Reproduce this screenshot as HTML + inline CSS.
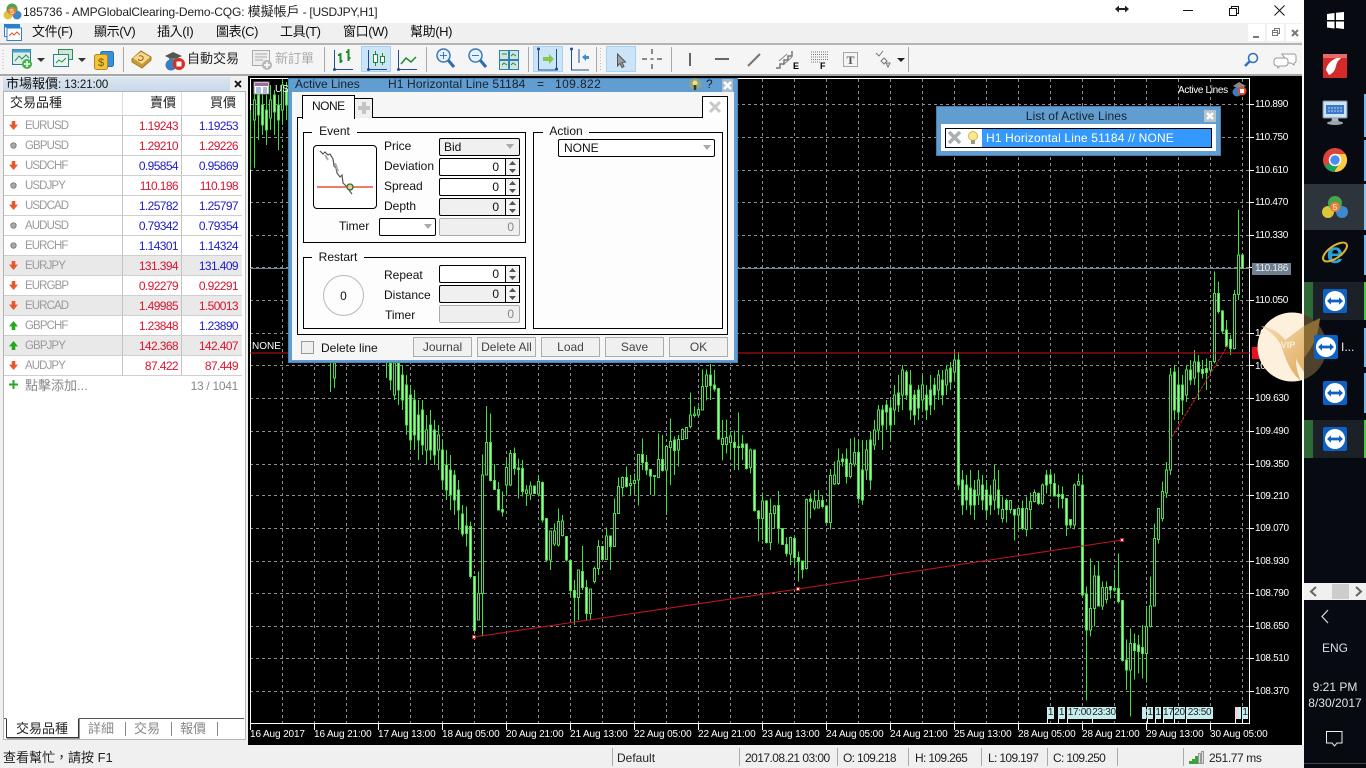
<!DOCTYPE html>
<html><head><meta charset="utf-8"><title>MT4</title>
<style>
html,body{margin:0;padding:0;width:1366px;height:768px;overflow:hidden;background:#f0f0f0;font-family:"Liberation Sans","Noto Sans CJK TC",sans-serif;font-size:12px;color:#111}
.a{position:absolute;box-sizing:border-box}
.t{position:absolute;white-space:nowrap;line-height:14px;height:14px}
.r{text-align:right}
.m{font-size:13px;letter-spacing:-.4px}
.sy{font-size:11.5px;letter-spacing:-.9px;color:#9a9a9a;margin-top:1px}
.p{font-size:12px;letter-spacing:-.6px;width:50px;text-align:right;margin-top:1px}
.R{color:#d9142e}.B{color:#1c1cc4}
.pl{color:#fff;font-size:10px;letter-spacing:-.35px;left:1255px;margin-top:1px}
.dl{color:#fff;font-size:10px;letter-spacing:-.12px;top:728px}
.f{position:absolute;box-sizing:border-box;border:1px solid #000;border-radius:2px;background:#fff}
.n{padding-right:20px;text-align:right;line-height:16px}
.g{background:#f0f0f0}
.d{position:absolute;box-sizing:border-box;border:1px solid #aaa;border-radius:2px;background:#efefef;color:#888;text-align:right;padding-right:5px;line-height:16px}
.btn{position:absolute;box-sizing:border-box;top:337px;height:20px;width:59px;border:1px solid #adadad;background:#f0f0f0;color:#444;text-align:center;line-height:18px}
.gr{position:absolute;box-sizing:border-box;border:1px solid #000}
.lg{position:absolute;background:#fdfdfd;text-align:center;line-height:14px;height:14px}
.sep{position:absolute;width:1px;background:#a8a8a8}
svg{position:absolute;overflow:visible}
.st{position:absolute;top:751px;height:14px;line-height:14px;white-space:nowrap;color:#222}
.q{letter-spacing:-.65px}
.sb{position:absolute;top:748px;height:18px;width:1px;background:#aaa}
.mk{position:absolute;top:707px;height:12px;background:#c4efee;color:#222;font-size:10px;line-height:12px;text-align:center;letter-spacing:-.3px;overflow:hidden}
.sq{position:absolute;top:719px;width:1px;height:4px;background:#fff}
.c{font-size:13px}
</style></head><body>
<svg width="0" height="0" style="position:absolute"><defs>
<symbol id="dn" viewBox="0 0 10 10"><path d="M3 0h4v4h3L5 10 0 4h3z" fill="#e8562c"/></symbol>
<symbol id="up" viewBox="0 0 10 10"><path d="M5 0l5 6H7v4H3V6H0z" fill="#25a81e"/></symbol>
<symbol id="dot" viewBox="0 0 10 10"><circle cx="5" cy="5" r="3" fill="#aaa" stroke="#777"/></symbol>
<symbol id="tv" viewBox="0 0 24 24"><rect width="24" height="24" rx="2" fill="#0d61c4"/><circle cx="12" cy="12" r="10" fill="#fff"/><path d="M4 12l4-3.600v2.200h8V8.400l4 3.600-4 3.600v-2.200H8v2.200z" fill="#0d61c4"/></symbol>
</defs></svg>

<!-- title bar -->
<div class="a" style="left:0;top:0;width:1303px;height:23px;background:#fff"></div>
<svg style="left:2px;top:2px" width="20" height="20" viewBox="0 0 20 20"><circle cx="6" cy="13" r="4.500" fill="#e2c23c"/><circle cx="15" cy="13" r="4.500" fill="#3e84c8"/><circle cx="10" cy="7" r="5.500" fill="#4aa54a"/><circle cx="10" cy="9" r="4" fill="#e8803c"/><text x="10" y="12" font-size="7" fill="#fff" text-anchor="middle" font-family="Liberation Sans">5</text></svg>
<div class="t" style="left:23px;top:5px;color:#222;font-size:12px;letter-spacing:-.13px">185736 - AMPGlobalClearing-Demo-CQG: <span class="c" style="letter-spacing:0">模擬帳戶</span><span style="letter-spacing:-.3px"> - [USDJPY,H1]</span></div>
<svg style="left:1115px;top:4px" width="14" height="10" viewBox="0 0 14 10"><path d="M0 5l4-3.500v2.500h6V1.500L14 5l-4 3.500V6H4v2.500z" fill="#222"/></svg>
<svg style="left:1180px;top:5px" width="110" height="12" viewBox="0 0 110 12"><path d="M3 5.500h10" stroke="#111"/><path d="M49.500 3.500h7v7h-7zM51.500 3.500v-2h7v7h-2" fill="none" stroke="#111"/><path d="M94.500.5l10 10M104.500.5l-10 10" stroke="#111"/></svg>

<!-- menu -->
<div class="a" style="left:0;top:23px;width:1303px;height:21px;background:#f0f0f0"></div>
<div class="a" style="left:0;top:43px;width:1303px;height:2px;background:#b4b4b4"></div>
<svg style="left:4px;top:24px" width="18" height="17" viewBox="0 0 18 17"><rect x=".5" y=".5" width="15" height="12" fill="#fff" stroke="#2f7fc8"/><rect x=".5" y=".5" width="15" height="3" fill="#2f7fc8"/><rect x="3" y="4" width="14.500" height="12.500" fill="#fff" stroke="#2f7fc8"/><path d="M5 12l3-3 2 2 3-3 3 3" stroke="#d8552a" fill="none"/></svg>
<div class="t m" style="left:32px;top:25px">文件(F)</div>
<div class="t m" style="left:94px;top:25px">顯示(V)</div>
<div class="t m" style="left:157px;top:25px">插入(I)</div>
<div class="t m" style="left:216px;top:25px">圖表(C)</div>
<div class="t m" style="left:280px;top:25px">工具(T)</div>
<div class="t m" style="left:343px;top:25px">窗口(W)</div>
<div class="t m" style="left:410px;top:25px">幫助(H)</div>
<div class="a" style="left:1248px;top:24px;width:17px;height:17px;background:#fff"></div>
<div class="a" style="left:1267px;top:24px;width:17px;height:17px;background:#fff"></div>
<div class="a" style="left:1286px;top:24px;width:17px;height:17px;background:#fff"></div>
<svg style="left:1248px;top:24px" width="56" height="18" viewBox="0 0 56 18"><path d="M5 12h6v2H5z" fill="#777"/><path d="M24.500 6.500h5v5h-5zM24.500 8.500h5M26.500 6.500v-2h5v5h-2" fill="none" stroke="#777"/><path d="M44 6l6 6M50 6l-6 6" stroke="#777" stroke-width="2"/></svg>

<!-- toolbar -->
<div class="a" style="left:0;top:45px;width:1303px;height:29px;background:#f5f5f5"></div>
<div class="a" style="left:0;top:74px;width:1303px;height:2px;background:#a8a8a8"></div>
<div class="a" style="left:361px;top:46px;width:30px;height:26px;background:#cce4f7;border:1px solid #a8d2f2"></div>
<div class="a" style="left:533px;top:46px;width:30px;height:26px;background:#cce4f7;border:1px solid #a8d2f2"></div>
<div class="a" style="left:606px;top:46px;width:30px;height:26px;background:#cce4f7;border:1px solid #a8d2f2"></div>
<div class="sep" style="left:123px;top:47px;height:25px"></div>
<div class="sep" style="left:324px;top:47px;height:25px"></div>
<div class="sep" style="left:426px;top:47px;height:25px"></div>
<div class="sep" style="left:528px;top:47px;height:25px"></div>
<div class="sep" style="left:596px;top:47px;height:25px"></div>
<div class="sep" style="left:671px;top:47px;height:25px"></div>
<div class="sep" style="left:908px;top:47px;height:25px"></div>
<svg style="left:0;top:45px" width="920" height="30" viewBox="0 0 920 30">
<path d="M3 5v20M600.500 3v24" stroke="#bbb" stroke-dasharray="1 2"/>
<rect x="12.500" y="4.500" width="18" height="15" fill="#d9efe6" stroke="#2d7c9c"/><rect x="12.500" y="4.500" width="18" height="3" fill="#4d9fd0"/><path d="M15 16l4-5 3 3 4-4 3 3" stroke="#2c8a54" fill="none"/><circle cx="27" cy="19" r="5" fill="#46b44a"/><path d="M27 16v6M24 19h6" stroke="#fff" stroke-width="1.500"/>
<path d="M37 13h8l-4 4z" fill="#333"/>
<rect x="58.500" y="4.500" width="14" height="10" fill="#cde8d2" stroke="#2d8a5c"/><rect x="53.500" y="9.500" width="15" height="12" fill="#e8f5ea" stroke="#2d7c9c"/><path d="M56 18l3-3 3 2 4-4" stroke="#2c8a54" fill="none"/>
<path d="M78 13h8l-4 4z" fill="#333"/>
<rect x="100.500" y="6.500" width="13" height="15" rx="2" fill="#3a90d8" stroke="#2470b4"/><rect x="94.500" y="9.500" width="13" height="15" rx="2" fill="#f2c53a" stroke="#b68a18"/>
<text x="101" y="21" font-size="11" fill="#7a5606" text-anchor="middle" font-family="Liberation Sans">$</text>
<path d="M132 14l9-8 10 6v3l-9 8-10-6z" fill="#c99a35" stroke="#a07a22"/><path d="M133 13l8-6 9 5-8 7z" fill="#f3dc90"/><path d="M139 11c3-1 5 1 4 3s-4 2-5 0" stroke="#a0661a" fill="none"/>
<path d="M165 11l8-4 9 4-9 4z" fill="#555"/><path d="M169 13h9v4h-9z" fill="#777"/><circle cx="171" cy="20" r="5.500" fill="#3a7dc4"/><circle cx="179" cy="19" r="6" fill="#d8301e"/><rect x="176.500" y="16.500" width="5" height="5" fill="#fff"/>
<rect x="252.500" y="5.500" width="17" height="15" fill="#eee" stroke="#aaa"/><path d="M255 9h12M255 12h12M255 15h8" stroke="#aaa"/><circle cx="267" cy="20" r="5" fill="#b8b8b8"/><path d="M267 17v6M264 20h6" stroke="#fff" stroke-width="1.500"/>
<path d="M334.500 5v19.500H353" stroke="#1d4f92" fill="none"/><circle cx="334.500" cy="24.500" r="1.500" fill="#1d4f92"/>
<path d="M340.500 8v10M338 10h2.500M340.500 16h2M348.500 4v12M346 7h2.500M348.500 13h2" stroke="#1e8a2e" stroke-width="2" fill="none"/>
<path d="M368.500 5v19.500H387" stroke="#1d4f92" fill="none"/><circle cx="368.500" cy="24.500" r="1.500" fill="#1d4f92"/>
<path d="M375.500 6v15M382.500 8v12" stroke="#1e8a2e"/><rect x="373.500" y="9.500" width="4" height="8" fill="#fff" stroke="#1e8a2e"/><rect x="380.500" y="11.500" width="4" height="6" fill="#fff" stroke="#1e8a2e"/>
<path d="M398.500 5v19.500H417" stroke="#1d4f92" fill="none"/><circle cx="398.500" cy="24.500" r="1.500" fill="#1d4f92"/>
<path d="M401 19l5-6 5 4 5-5" stroke="#1e8a2e" stroke-width="1.500" fill="none"/>
<circle cx="443.500" cy="10.500" r="6.500" fill="#e6f2fb" stroke="#3a78b8" stroke-width="1.500"/><path d="M440 10.500h7M443.500 7v7" stroke="#3a78b8"/><path d="M448 15l6 7" stroke="#2f6bb0" stroke-width="3"/>
<circle cx="475.500" cy="10.500" r="6.500" fill="#e6f2fb" stroke="#3a78b8" stroke-width="1.500"/><path d="M472 10.500h7" stroke="#3a78b8"/><path d="M480 15l6 7" stroke="#2f6bb0" stroke-width="3"/>
<rect x="499.500" y="5.500" width="19" height="19" fill="#cfe6d8" stroke="#2f7fb8"/><path d="M499 15h20M509 5v20" stroke="#2f7fb8" stroke-width="2"/><path d="M502 9h5M511 11l2-2 3 2M502 20l2-2 3 2M511 20l2-2 3 2" stroke="#2c8a54" fill="none"/>
<path d="M538.500 3v22H558M556.500 4v20" stroke="#1d4f92" fill="none"/><circle cx="538.500" cy="4" r="1.500" fill="#1d4f92"/><circle cx="556.500" cy="24" r="1.500" fill="#1d4f92"/><path d="M543 12h6v-3l5 5-5 5v-3h-6z" fill="#82c84a"/>
<path d="M571.500 3v22H589M579 4v14" stroke="#1d4f92" fill="none"/><circle cx="571.500" cy="4" r="1.500" fill="#1d4f92"/><path d="M582 12l4-3v2h3v3h-3v2z" fill="#3a90d8"/>
<path d="M617.500 9l8 8-3.500.5 2 4-2 1-2-4-2.500 2.500z" fill="#9aa0a6" stroke="#555"/>
<path d="M642 14h5M657 14h5M652 4v5M652 19v5M650.500 14h3" stroke="#666" stroke-width="1.500"/>
<path d="M690 8v13" stroke="#666" stroke-width="2"/><path d="M715 14h14" stroke="#666" stroke-width="2"/><path d="M748 21l12-12" stroke="#777" stroke-width="2"/>
<path d="M776 23h4v-4h4v-4h4v-4h4V6" fill="none" stroke="#777" stroke-width="1.500"/><path d="M779 16l8-7M783 20l9-8" stroke="#888"/><text x="793" y="24" font-size="9" font-weight="bold" fill="#000" font-family="Liberation Sans">E</text>
<path d="M811 7h18M811 9.500h18M811 12h18M811 14.500h18M811 17h10" stroke="#777" stroke-dasharray="1 1"/><text x="820" y="24" font-size="9" font-weight="bold" fill="#000" font-family="Liberation Sans">F</text>
<rect x="843.500" y="7.500" width="14" height="14" fill="none" stroke="#555" stroke-dasharray="1 1"/><text x="850.500" y="19" font-size="12" font-weight="bold" fill="#555" text-anchor="middle" font-family="Liberation Serif">T</text>
<path d="M876 8l3 3 4-5M881 16l3-3 3 3-3 3z" stroke="#777" fill="none"/><path d="M886 18l4 0-2 4z" fill="none" stroke="#777"/>
<path d="M897 13h8l-4 4z" fill="#222"/>
</svg>
<div class="t c" style="left:187px;top:52px;color:#222">自動交易</div>
<div class="t c" style="left:275px;top:52px;color:#aaa">新訂單</div>
<svg style="left:1244px;top:52px" width="54" height="17" viewBox="0 0 54 17"><circle cx="9" cy="6" r="4.500" fill="none" stroke="#2c6fc0" stroke-width="1.500"/><path d="M6 9l-5 5" stroke="#2c6fc0" stroke-width="2.500"/><path d="M38 2h12a2 2 0 0 1 2 2v5a2 2 0 0 1-2 2l0 2-3-2h-3z" fill="#fff" stroke="#999"/><path d="M33 6h8a3 3 0 0 1 3 3v2a3 3 0 0 1-3 3h-5l-2 2v-2h-1a3 3 0 0 1-3-3V9a3 3 0 0 1 3-3z" fill="#fff" stroke="#999"/></svg>

<!-- left panel -->
<div class="a" style="left:0;top:76px;width:248px;height:669px;background:#f0f0f0"></div>
<div class="a" style="left:3px;top:77px;width:227px;height:14px;background:linear-gradient(#dbe6f0,#c9d9e8)"></div>
<div class="t" style="left:6px;top:77px;font-size:13px;color:#111">市場報價<span style="font-size:11.500px;letter-spacing:-.1px">: 13:21:00</span></div>
<svg style="left:234px;top:80px" width="8" height="8" viewBox="0 0 8 8"><path d="M1 1l6 6M7 1l-6 6" stroke="#111" stroke-width="1.800"/></svg>
<div class="a" style="left:3px;top:91px;width:243px;height:649px;background:#fff;border:1px solid #b4b4b4"></div>
<div class="t c" style="left:10px;top:96px;color:#222">交易品種</div>
<div class="t c" style="left:150px;top:96px;color:#222">賣價</div>
<div class="t c" style="left:210px;top:96px;color:#222">買價</div>
<div class="a" style="left:122px;top:92px;width:1px;height:283px;background:#ddd"></div>
<div class="a" style="left:181px;top:92px;width:1px;height:283px;background:#ddd"></div>

<div class="a" style="left:4px;top:255px;width:238px;height:20px;background:#e9e9e9"></div>
<div class="a" style="left:4px;top:295px;width:238px;height:20px;background:#e9e9e9"></div>
<div class="a" style="left:4px;top:335px;width:238px;height:20px;background:#e9e9e9"></div>
<div class="a" style="left:122px;top:115px;width:1px;height:260px;background:#c4c4c4"></div>
<div class="a" style="left:181px;top:115px;width:1px;height:260px;background:#c4c4c4"></div>
<svg style="left:4px;top:115px" width="238" height="281" viewBox="0 0 238 281"><path d="M0 .5h238M0 20.500h238M0 40.500h238M0 60.500h238M0 80.500h238M0 100.500h238M0 120.500h238M0 140.500h238M0 160.500h238M0 180.500h238M0 200.500h238M0 220.500h238M0 240.500h238M0 260.500h238" stroke="#cfcfcf"/>
<use href="#dn" x="5" y="6" width="9" height="9"/><use href="#dot" x="5" y="26" width="9" height="9"/><use href="#dn" x="5" y="46" width="9" height="9"/><use href="#dot" x="5" y="66" width="9" height="9"/><use href="#dn" x="5" y="86" width="9" height="9"/><use href="#dot" x="5" y="106" width="9" height="9"/><use href="#dot" x="5" y="126" width="9" height="9"/><use href="#dn" x="5" y="146" width="9" height="9"/><use href="#dn" x="5" y="166" width="9" height="9"/><use href="#dn" x="5" y="186" width="9" height="9"/><use href="#up" x="5" y="206" width="9" height="9"/><use href="#up" x="5" y="226" width="9" height="9"/><use href="#dn" x="5" y="246" width="9" height="9"/>
<path d="M9.500 265v9M5 269.500h9" stroke="#2aa52a" stroke-width="2"/></svg>

<div class="t sy" style="left:25px;top:118px">EURUSD</div><div class="t p R" style="left:128px;top:118px">1.19243</div><div class="t p B" style="left:188px;top:118px">1.19253</div>
<div class="t sy" style="left:25px;top:138px">GBPUSD</div><div class="t p R" style="left:128px;top:138px">1.29210</div><div class="t p R" style="left:188px;top:138px">1.29226</div>
<div class="t sy" style="left:25px;top:158px">USDCHF</div><div class="t p B" style="left:128px;top:158px">0.95854</div><div class="t p B" style="left:188px;top:158px">0.95869</div>
<div class="t sy" style="left:25px;top:178px">USDJPY</div><div class="t p R" style="left:128px;top:178px">110.186</div><div class="t p R" style="left:188px;top:178px">110.198</div>
<div class="t sy" style="left:25px;top:198px">USDCAD</div><div class="t p B" style="left:128px;top:198px">1.25782</div><div class="t p B" style="left:188px;top:198px">1.25797</div>
<div class="t sy" style="left:25px;top:218px">AUDUSD</div><div class="t p B" style="left:128px;top:218px">0.79342</div><div class="t p B" style="left:188px;top:218px">0.79354</div>
<div class="t sy" style="left:25px;top:238px">EURCHF</div><div class="t p B" style="left:128px;top:238px">1.14301</div><div class="t p B" style="left:188px;top:238px">1.14324</div>
<div class="t sy" style="left:25px;top:258px">EURJPY</div><div class="t p R" style="left:128px;top:258px">131.394</div><div class="t p B" style="left:188px;top:258px">131.409</div>
<div class="t sy" style="left:25px;top:278px">EURGBP</div><div class="t p R" style="left:128px;top:278px">0.92279</div><div class="t p R" style="left:188px;top:278px">0.92291</div>
<div class="t sy" style="left:25px;top:298px">EURCAD</div><div class="t p R" style="left:128px;top:298px">1.49985</div><div class="t p R" style="left:188px;top:298px">1.50013</div>
<div class="t sy" style="left:25px;top:318px">GBPCHF</div><div class="t p R" style="left:128px;top:318px">1.23848</div><div class="t p B" style="left:188px;top:318px">1.23890</div>
<div class="t sy" style="left:25px;top:338px">GBPJPY</div><div class="t p R" style="left:128px;top:338px">142.368</div><div class="t p R" style="left:188px;top:338px">142.407</div>
<div class="t sy" style="left:25px;top:358px">AUDJPY</div><div class="t p R" style="left:128px;top:358px">87.422</div><div class="t p R" style="left:188px;top:358px">87.449</div>
<div class="t c" style="left:25px;top:379px;color:#888">點擊添加...</div>
<div class="t r" style="left:170px;top:379px;width:68px;color:#888;letter-spacing:-.3px">13 / 1041</div>

<!-- bottom tabs -->
<div class="a" style="left:4px;top:718px;width:240px;height:1px;background:#555"></div>
<div class="a" style="left:6px;top:718px;width:73px;height:20px;background:#fff;border:1px solid #333;border-top:1px solid #fff;box-shadow:1px 1px 0 #999"></div>
<div class="t c" style="left:16px;top:722px;color:#222">交易品種</div>
<div class="t c" style="left:88px;top:722px;color:#888">詳細</div><div class="a" style="left:125px;top:722px;width:1px;height:14px;background:#888"></div>
<div class="t c" style="left:134px;top:722px;color:#888">交易</div><div class="a" style="left:171px;top:722px;width:1px;height:14px;background:#888"></div>
<div class="t c" style="left:180px;top:722px;color:#888">報價</div><div class="a" style="left:217px;top:722px;width:1px;height:14px;background:#888"></div>

<!-- chart -->
<div class="a" style="left:248px;top:76px;width:1054px;height:669px;background:#000"></div>
<svg style="left:0;top:0" width="1366" height="768" viewBox="0 0 1366 768">
<g shape-rendering="crispEdges">
<path d="M250 104.500H1249M250 137.500H1249M250 170.500H1249M250 202.500H1249M250 235.500H1249M250 267.500H1249M250 300.500H1249M250 333.500H1249M250 365.500H1249M250 398.500H1249M250 431.500H1249M250 464.500H1249M250 495.500H1249M250 528.500H1249M250 561.500H1249M250 593.500H1249M250 626.500H1249M250 658.500H1249M250 691.500H1249" stroke="#8c8c8c" stroke-dasharray="3 3"/>
<path d="M282.500 79V723M314.500 79V723M346.500 79V723M378.500 79V723M410.500 79V723M442.500 79V723M474.500 79V723M506.500 79V723M538.500 79V723M570.500 79V723M602.500 79V723M634.500 79V723M666.500 79V723M698.500 79V723M730.500 79V723M762.500 79V723M794.500 79V723M826.500 79V723M858.500 79V723M890.500 79V723M922.500 79V723M954.500 79V723M986.500 79V723M1018.500 79V723M1050.500 79V723M1082.500 79V723M1114.500 79V723M1146.500 79V723M1178.500 79V723M1210.500 79V723M1242.500 79V723" stroke="#8c8c8c" stroke-dasharray="3 3"/>
<path d="M250.500 78.500H1249.500V723.500H250.500z" fill="none" stroke="#fff"/>
<path d="M250.500 723v7M314.500 723v7M378.500 723v7M442.500 723v7M506.500 723v7M570.500 723v7M634.500 723v7M698.500 723v7M762.500 723v7M826.500 723v7M890.500 723v7M954.500 723v7M1018.500 723v7M1082.500 723v7M1146.500 723v7M1210.500 723v7" stroke="#fff"/>
<path d="M1249 104.500h5M1249 137.500h5M1249 170.500h5M1249 202.500h5M1249 235.500h5M1249 267.500h5M1249 300.500h5M1249 333.500h5M1249 365.500h5M1249 398.500h5M1249 431.500h5M1249 464.500h5M1249 495.500h5M1249 528.500h5M1249 561.500h5M1249 593.500h5M1249 626.500h5M1249 658.500h5M1249 691.500h5" stroke="#fff"/>
<path d="M250 268.500H1250" stroke="#708090"/>
</g>

<g transform="translate(460.170 360) scale(.33333)" shape-rendering="crispEdges" stroke="#3fe03f" stroke-width="3">
<path fill="none" d="M7 435V530M19 440V560M31 485V655M43 650V815M55 635V780M67 283V830M79 138V345M91 160V365M103 312V390M115 366V452M127 395V470M139 300V400M151 270V378M163 262V345M175 295V415M187 300V410M199 375V438M211 365V420M223 378V402M235 345V410M247 365V488M259 475V605M271 513V630M283 490V558M295 445V560M307 465V530M319 528V605M331 600V710M343 660V795M355 630V780M367 558V690M379 660V780M391 685V780M403 620V670M415 540V645M427 560V600M439 503V600M451 528V630M463 415V560M475 352V460M487 350V410M499 320V382M511 345V405M523 340V400M535 283V437M547 235V330M559 285V345M571 328V405M583 348V405M595 220V352M607 225V335M619 255V465M631 175V375M643 230V345M655 225V320M667 205V240M679 203V235M691 97V205M703 140V172M715 140V170M727 28V150M739 28V122M751 12V120M763 30V95M775 85V240M787 180V302M799 178V280M811 215V298M823 212V330M835 157V330M847 225V300M859 250V328M871 265V340M883 270V455M895 450V545M907 397V540M919 420V550M931 415V570M943 435V505M955 393V550M967 505V555M979 533V590M991 530V615M1003 530V620M1015 575V665M1027 603V655M1039 415V628M1051 400V475M1063 390V450M1075 390V445M1087 405V445M1099 435V490M1111 327V508M1123 305V375M1135 265V375M1147 280V320M1159 265V370M1171 235V355M1183 232V320M1195 240V430"/>
<path fill="#000" d="M52 700h6V780h-6zM64 345h6V700h-6zM76 247h6V345h-6zM136 322h6V375h-6zM148 280h6V375h-6zM196 390h6V400h-6zM208 378h6V402h-6zM232 365h6V402h-6zM268 513h6V600h-6zM280 513h6V552h-6zM292 485h6V555h-6zM304 483h6V527h-6zM352 630h6V712h-6zM388 687h6V760h-6zM400 625h6V665h-6zM412 560h6V625h-6zM436 528h6V598h-6zM460 460h6V560h-6zM472 380h6V460h-6zM484 352h6V382h-6zM508 370h6V377h-6zM520 362h6V370h-6zM532 283h6V360h-6zM592 298h6V352h-6zM616 260h6V330h-6zM628 245h6V262h-6zM652 238h6V270h-6zM664 208h6V238h-6zM676 203h6V235h-6zM688 165h6V200h-6zM700 162h6V166h-6zM712 148h6V165h-6zM724 80h6V150h-6zM736 45h6V80h-6zM784 235h6V254h-6zM796 232h6V254h-6zM808 228h6V248h-6zM868 270h6V323h-6zM904 423h6V475h-6zM928 460h6V548h-6zM940 438h6V460h-6zM988 533h6V582h-6zM1036 418h6V625h-6zM1060 423h6V444h-6zM1072 422h6V444h-6zM1108 347h6V488h-6zM1120 345h6V372h-6zM1132 303h6V370h-6zM1168 310h6V350h-6zM1180 278h6V312h-6z"/>
<path fill="#a4f4a4" d="M4 462h6V522h-6zM16 498h6V520h-6zM28 500h6V650h-6zM40 650h6V812h-6zM88 247h6V362h-6zM100 362h6V388h-6zM112 388h6V450h-6zM124 448h6V456h-6zM160 280h6V325h-6zM172 324h6V328h-6zM184 325h6V395h-6zM220 378h6V400h-6zM244 367h6V480h-6zM256 475h6V600h-6zM316 530h6V600h-6zM328 602h6V692h-6zM340 692h6V712h-6zM364 634h6V682h-6zM376 682h6V760h-6zM424 560h6V598h-6zM448 528h6V560h-6zM496 352h6V380h-6zM544 283h6V307h-6zM556 307h6V330h-6zM568 328h6V348h-6zM580 346h6V349h-6zM604 298h6V332h-6zM640 240h6V272h-6zM748 45h6V77h-6zM760 75h6V87h-6zM772 85h6V237h-6zM820 247h6V263h-6zM832 260h6V262h-6zM844 252h6V262h-6zM856 252h6V325h-6zM880 270h6V452h-6zM892 453h6V475h-6zM916 423h6V548h-6zM952 436h6V505h-6zM964 505h6V553h-6zM976 553h6V580h-6zM1000 535h6V592h-6zM1012 592h6V605h-6zM1024 603h6V628h-6zM1048 417h6V425h-6zM1084 422h6V440h-6zM1096 438h6V488h-6zM1144 297h6V305h-6zM1156 297h6V350h-6zM1192 278h6V415h-6z"/>
</g>
<g transform="translate(1000.170 480) scale(.33333)" shape-rendering="crispEdges" stroke="#3fe03f" stroke-width="3">
<path fill="none" d="M7 50V128M19 55V128M31 62V100M43 88V182M55 85V150M67 62V150M79 50V170M91 38V148M103 28V68M115 38V75M127 10V75M139 -30V40M151 -30V50M163 -20V50M175 15V85M187 20V85M199 55V168M211 118V145M223 10V148M235 -20V18M247 -15V345M259 320V662M271 235V470M283 255V440M295 245V380M307 305V390M319 305V370M331 318V355M343 270V335M355 220V370M367 360V545M379 478V630M391 445V710M403 460V598M415 465V580M427 435V595M439 378V608M451 290V442M463 130V380M475 85V190M487 5V125M499 -30V40"/>
<path fill="#000" d="M4 88h6V116h-6zM28 62h6V88h-6zM52 85h6V105h-6zM76 85h6V148h-6zM88 65h6V88h-6zM100 38h6V65h-6zM124 15h6V70h-6zM220 15h6V135h-6zM232 5h6V15h-6zM268 385h6V450h-6zM280 288h6V385h-6zM304 322h6V378h-6zM316 322h6V358h-6zM388 490h6V570h-6zM436 440h6V520h-6zM448 378h6V440h-6zM460 175h6V378h-6zM472 85h6V178h-6zM484 35h6V115h-6zM496 -30h6V38h-6z"/>
<path fill="#a4f4a4" d="M16 62h6V88h-6zM40 88h6V105h-6zM64 85h6V145h-6zM112 40h6V70h-6zM136 -15h6V15h-6zM148 -15h6V10h-6zM160 10h6V48h-6zM172 43h6V50h-6zM184 43h6V55h-6zM196 55h6V135h-6zM208 118h6V135h-6zM244 15h6V345h-6zM256 342h6V450h-6zM292 288h6V378h-6zM328 320h6V330h-6zM340 325h6V330h-6zM352 325h6V365h-6zM364 362h6V542h-6zM376 540h6V570h-6zM400 490h6V512h-6zM412 495h6V515h-6zM424 502h6V520h-6z"/>
</g>
<g transform="translate(1200.170 160) scale(.33333)" shape-rendering="crispEdges" stroke="#3fe03f" stroke-width="3">
<path fill="none" d="M7 600V655M19 595V690M31 605V640M43 335V610M55 365V460M67 450V520M79 480V562M91 525V585M103 390V568M115 150V420M127 285V325"/>
<path fill="#000" d="M28 605h6V630h-6zM40 400h6V605h-6zM100 403h6V565h-6zM112 285h6V403h-6z"/>
<path fill="#a4f4a4" d="M4 628h6V640h-6zM16 625h6V638h-6zM52 400h6V455h-6zM64 453h6V513h-6zM76 510h6V560h-6zM88 538h6V565h-6zM124 285h6V325h-6z"/>
</g>
<g transform="translate(.5 0)" shape-rendering="crispEdges" stroke="#3fe03f">
<path fill="none" d="M250 110V170M254 82V168M258 85V140M262 90V135M266 95V145M270 85V130M274 90V135M278 95V150M282 80V125M286 82V120M330 363V392M334 363V388M386 363V378M390 363V390M394 363V400M398 363V405M402 365V410M406 375V435M410 385V450M414 390V450M418 400V460M422 400V455M426 415V465M430 410V460M434 420V465M438 425V470M442 440V490M446 450V500M450 455V510M454 470V515M458 480V530M862 440V505M866 440V480M870 432V490M874 420V450M878 405V440M882 405V450M886 400V430M890 400V440M894 385V425M898 375V412M902 365V410M906 370V400M910 370V420M914 390V425M918 385V420M922 375V410M926 385V420M930 375V415M934 378V410M938 370V400M942 370V405M946 365V395M950 362V390M954 352V380M958 352V490M962 470V515M966 475V510M970 470V515M974 480V520M978 470V505M982 475V510M986 480V520M990 485V515M994 465V510M998 470V515M1166 462V498M1170 368V475M1174 365V420M1178 370V420M1182 375V415M1186 365V402M1190 360V385M1194 350V385M1198 355V400"/>
<path fill="#000" d="M253 100h2V120h-2zM269 100h2V118h-2zM281 85h2V110h-2zM333 363h2V378h-2zM393 363h2V395h-2zM425 430h2V450h-2zM437 435h2V450h-2zM865 450h2V470h-2zM873 430h2V445h-2zM877 410h2V430h-2zM893 395h2V410h-2zM901 370h2V395h-2zM921 385h2V400h-2zM937 375h2V390h-2zM945 370h2V385h-2zM953 360h2V372h-2zM977 480h2V495h-2zM993 480h2V500h-2zM1165 470h2V493h-2zM1169 375h2V470h-2zM1185 370h2V395h-2zM1193 362h2V378h-2z"/>
<path fill="#a4f4a4" d="M257 95h2V115h-2zM261 105h2V125h-2zM265 110h2V130h-2zM273 95h2V112h-2zM277 105h2V120h-2zM285 90h2V105h-2zM389 363h2V380h-2zM397 363h2V390h-2zM401 375h2V400h-2zM405 385h2V425h-2zM409 395h2V440h-2zM413 400h2V435h-2zM417 415h2V440h-2zM421 410h2V445h-2zM429 425h2V450h-2zM433 430h2V455h-2zM441 450h2V480h-2zM445 465h2V490h-2zM449 470h2V495h-2zM453 475h2V500h-2zM457 490h2V510h-2zM861 470h2V500h-2zM869 440h2V480h-2zM881 410h2V425h-2zM885 405h2V412h-2zM889 408h2V425h-2zM897 393h2V405h-2zM905 372h2V395h-2zM909 385h2V410h-2zM913 395h2V415h-2zM917 390h2V408h-2zM925 395h2V410h-2zM929 390h2V405h-2zM933 385h2V395h-2zM941 380h2V395h-2zM949 368h2V382h-2zM957 360h2V485h-2zM961 480h2V505h-2zM965 485h2V500h-2zM969 488h2V505h-2zM973 490h2V505h-2zM981 485h2V500h-2zM985 490h2V510h-2zM989 495h2V505h-2zM997 490h2V508h-2zM1173 372h2V410h-2zM1177 385h2V412h-2zM1181 385h2V400h-2zM1189 370h2V380h-2zM1197 362h2V372h-2z"/>
</g>
<path d="M250 353H1250" stroke="#cc1018" shape-rendering="crispEdges"/>
<path d="M474 637L798 589L1122 540" stroke="#b81622" stroke-width="1.100" fill="none"/>
<path d="M1170 440L1228 345" stroke="#d02028" stroke-dasharray="3 1" fill="none"/>
<g fill="#fff" stroke="#d41818" shape-rendering="crispEdges"><rect x="472.500" y="635.500" width="3" height="3"/><rect x="796.500" y="587.500" width="3" height="3"/><rect x="1120.500" y="538.500" width="3" height="3"/></g>
</svg>

<div class="t" style="left:252px;top:340px;color:#fff;font-size:10px">NONE</div>
<svg style="left:254px;top:82px" width="16" height="13" viewBox="0 0 16 13"><rect width="15" height="12" fill="#fff" stroke="#888"/><rect x="1" y="1" width="13" height="3" fill="#a06a9c"/><path d="M2 6h5M9 6h4M2 8h5M9 8h4M2 10h5M9 10h4" stroke="#5577bb"/></svg>
<div class="t" style="left:275px;top:83px;color:#fff;font-size:10px">US</div>
<div class="t" style="left:1178px;top:84px;color:#fff;font-size:10px;letter-spacing:-.35px">Active Lines</div>
<svg style="left:1231px;top:80px" width="17" height="17" viewBox="0 0 17 17"><path d="M2 6l6-4 7 4-7 3z" fill="#8a8a8a"/><circle cx="6" cy="12" r="4.500" fill="#3a7dc4"/><circle cx="11" cy="11" r="4.500" fill="#e04a30"/><rect x="9" y="9" width="4" height="4" fill="#fff"/></svg>
<div class="t pl" style="top:97px">110.890</div><div class="t pl" style="top:130px">110.750</div><div class="t pl" style="top:163px">110.610</div><div class="t pl" style="top:195px">110.470</div><div class="t pl" style="top:228px">110.330</div><div class="t pl" style="top:293px">110.050</div><div class="t pl" style="top:326px">109.910</div><div class="t pl" style="top:359px">109.770</div><div class="t pl" style="top:391px">109.630</div><div class="t pl" style="top:424px">109.490</div><div class="t pl" style="top:457px">109.350</div><div class="t pl" style="top:489px">109.210</div><div class="t pl" style="top:521px">109.070</div><div class="t pl" style="top:554px">108.930</div><div class="t pl" style="top:586px">108.790</div><div class="t pl" style="top:619px">108.650</div><div class="t pl" style="top:651px">108.510</div><div class="t pl" style="top:684px">108.370</div>
<div class="a" style="left:1252px;top:263px;width:39px;height:12px;background:#708090"></div>
<div class="t pl" style="top:261px;color:#e8eef2">110.186</div>
<div class="a" style="left:1252px;top:347px;width:28px;height:12px;background:#e8101c"></div>
<div class="t dl" style="left:250px">16 Aug 2017</div><div class="t dl" style="left:314px">16 Aug 21:00</div><div class="t dl" style="left:378px">17 Aug 13:00</div><div class="t dl" style="left:442px">18 Aug 05:00</div><div class="t dl" style="left:506px">20 Aug 21:00</div><div class="t dl" style="left:570px">21 Aug 13:00</div><div class="t dl" style="left:634px">22 Aug 05:00</div><div class="t dl" style="left:698px">22 Aug 21:00</div><div class="t dl" style="left:762px">23 Aug 13:00</div><div class="t dl" style="left:826px">24 Aug 05:00</div><div class="t dl" style="left:890px">24 Aug 21:00</div><div class="t dl" style="left:954px">25 Aug 13:00</div><div class="t dl" style="left:1018px">28 Aug 05:00</div><div class="t dl" style="left:1082px">28 Aug 21:00</div><div class="t dl" style="left:1146px">29 Aug 13:00</div><div class="t dl" style="left:1210px">30 Aug 05:00</div>

<div class="mk" style="left:1047px;width:7px">1</div><div class="mk" style="left:1058px;width:7px">1</div><div class="mk" style="left:1067px;width:25px">17:00</div><div class="mk" style="left:1092px;width:24px">23:30</div>
<div class="mk" style="left:1142px;width:4px"></div><div class="mk" style="left:1147px;width:6px">1</div><div class="mk" style="left:1155px;width:6px">1</div><div class="mk" style="left:1163px;width:10px">17</div><div class="mk" style="left:1174px;width:11px">20</div><div class="mk" style="left:1186px;width:27px">23:50</div>
<div class="mk" style="left:1235px;width:3px;background:#f4d4dc"></div><div class="mk" style="left:1238px;width:3px"></div><div class="mk" style="left:1242px;width:6px">1</div>
<div class="sq" style="left:1047px"></div><div class="sq" style="left:1058px"></div><div class="sq" style="left:1067px"></div><div class="sq" style="left:1092px"></div><div class="sq" style="left:1147px"></div><div class="sq" style="left:1155px"></div><div class="sq" style="left:1163px"></div><div class="sq" style="left:1174px"></div><div class="sq" style="left:1186px"></div><div class="sq" style="left:1235px"></div><div class="sq" style="left:1242px"></div>

<!-- list -->
<div class="a" style="left:936px;top:106px;width:285px;height:50px;background:#619dd0;border:1px solid #4a7ea8"></div>
<div class="t" style="left:936px;top:109px;width:281px;text-align:center;color:#16222e;letter-spacing:.1px">List of Active Lines</div>
<div class="a" style="left:1204px;top:110px;width:12px;height:12px;background:#b8c4cc"></div>
<svg style="left:1204px;top:110px" width="12" height="12" viewBox="0 0 12 12"><path d="M3 3l6 6M9 3l-6 6" stroke="#fff" stroke-width="2.500"/></svg>
<div class="a" style="left:941px;top:124px;width:275px;height:27px;background:#fff"></div>
<div class="a" style="left:945px;top:128px;width:267px;height:20px;background:#fff;border:1px solid #000"></div>
<div class="a" style="left:982px;top:129px;width:229px;height:18px;background:#3399ff"></div>
<svg style="left:947px;top:130px" width="34" height="16" viewBox="0 0 34 16"><path d="M2 2l11 11M13 2L2 13" stroke="#a8b0b4" stroke-width="3.500"/><circle cx="26" cy="6" r="4.500" fill="#fce98a" stroke="#cdb85a"/><path d="M24 10h4v4h-4z" fill="#9a9a7a"/></svg>
<div class="t" style="left:986px;top:131px;color:#fff;letter-spacing:.17px">H1 Horizontal Line 51184 // NONE</div>

<!-- dialog -->
<div class="a" style="left:288px;top:78px;width:450px;height:285px;background:#619dd0;border:1px solid #4a85b4"></div>
<div class="t" style="left:295px;top:77px;color:#16222e">Active Lines</div>
<div class="t" style="left:388px;top:77px;color:#16222e;letter-spacing:.12px">H1 Horizontal Line 51184</div>
<div class="t" style="left:537px;top:77px;color:#16222e">=</div>
<div class="t" style="left:555px;top:77px;color:#16222e;letter-spacing:.4px">109.822</div>
<svg style="left:688px;top:78px" width="14" height="14" viewBox="0 0 14 14"><circle cx="7" cy="6" r="6" fill="#9ea86a" opacity=".7"/><circle cx="7" cy="5" r="2.500" fill="#f6e27a"/><rect x="5.800" y="7" width="2.500" height="5" fill="#3a3a2a"/></svg>
<div class="t" style="left:706px;top:77px;color:#16222e">?</div>
<div class="a" style="left:722px;top:79px;width:11px;height:13px;background:#a8bccc"></div>
<svg style="left:722px;top:80px" width="11" height="11" viewBox="0 0 11 11"><path d="M2 2l7 7M9 2l-7 7" stroke="#fff" stroke-width="2.500"/></svg>
<div class="a" style="left:292px;top:92px;width:442px;height:268px;background:#f6f6f6"></div>
<div class="a" style="left:297px;top:117px;width:431px;height:218px;background:#fdfdfd;border:1px solid #000"></div>
<div class="a" style="left:302px;top:95px;width:53px;height:24px;background:#fdfdfd;border:1px solid #000;border-bottom:none"></div>
<div class="t" style="left:312px;top:99px;color:#111;letter-spacing:-.5px">NONE</div>
<div class="a" style="left:355px;top:98px;width:18px;height:20px;background:#f0f0f0;border:1px solid #000;border-left:none;border-bottom:none"></div>
<svg style="left:358px;top:102px" width="12" height="12" viewBox="0 0 12 12"><path d="M6 0v12M0 6h12" stroke="#c4c4c4" stroke-width="4"/></svg>
<div class="a" style="left:702px;top:96px;width:26px;height:22px;background:#fff;border:1px solid #000;border-bottom:none"></div>
<svg style="left:709px;top:101px" width="12" height="12" viewBox="0 0 12 12"><path d="M1 1l10 10M11 1L1 11" stroke="#c8c8c8" stroke-width="3"/></svg>

<div class="gr" style="left:303px;top:132px;width:223px;height:111px"></div>
<div class="lg" style="left:312px;top:124px;width:45px">Event</div>
<div class="a" style="left:313px;top:145px;width:64px;height:64px;background:#fff;border:1px solid #000;border-radius:4px"></div>
<svg style="left:313px;top:145px" width="64" height="64" viewBox="0 0 64 64"><path d="M7 6l3 3 2-2 3 3 2-1 3 5 1 7 2 2 1 5 3 4 2-2 1 8 3 3 3 4 3 4" stroke="#555" stroke-width="1.200" fill="none"/><path d="M12 10l3 5M22 18l3 8" stroke="#aaa" stroke-width="2"/><path d="M4 42h56" stroke="#e8503c" stroke-width="1.500"/><circle cx="37" cy="42" r="3" fill="#f4c4a0" stroke="#1a7a2a" stroke-width="1.300"/></svg>
<div class="t" style="left:384px;top:139px">Price</div>
<div class="t" style="left:384px;top:159px">Deviation</div>
<div class="t" style="left:384px;top:179px">Spread</div>
<div class="t" style="left:384px;top:199px">Depth</div>
<div class="t" style="left:339px;top:219px">Timer</div>
<div class="f g" style="left:439px;top:138px;width:81px;height:18px;padding-left:4px;line-height:16px">Bid</div>
<svg style="left:505px;top:144px" width="10" height="6" viewBox="0 0 10 6"><path d="M1 0h8L5 5z" fill="#aaa"/></svg>
<div class="f n" style="left:439px;top:158px;width:81px;height:18px">0</div>
<div class="f n" style="left:439px;top:178px;width:81px;height:18px">0</div>
<div class="f g n" style="left:439px;top:198px;width:81px;height:18px">0</div>
<svg style="left:505px;top:158px" width="15" height="58" viewBox="0 0 15 58"><g fill="#f4f4f4" stroke="#000"><rect x=".5" y=".5" width="14" height="17"/><rect x=".5" y="20.500" width="14" height="17"/><rect x=".5" y="40.500" width="14" height="17"/></g><path d="M4 7l3.500-4 3.500 4zM4 11h7l-3.500 4zM4 27l3.500-4 3.500 4zM4 31h7l-3.500 4zM4 47l3.500-4 3.500 4zM4 51h7l-3.500 4z" fill="#555"/></svg>
<div class="f" style="left:379px;top:218px;width:57px;height:18px"></div>
<svg style="left:423px;top:224px" width="10" height="6" viewBox="0 0 10 6"><path d="M1 0h8L5 5z" fill="#aaa"/></svg>
<div class="d" style="left:439px;top:218px;width:81px;height:18px">0</div>

<div class="gr" style="left:303px;top:257px;width:223px;height:72px"></div>
<div class="lg" style="left:312px;top:250px;width:52px">Restart</div>
<div class="a" style="left:323px;top:275px;width:41px;height:41px;border:1px solid #b8b8b8;border-radius:50%"></div>
<div class="t" style="left:323px;top:289px;width:41px;text-align:center">0</div>
<div class="t" style="left:384px;top:268px">Repeat</div>
<div class="t" style="left:384px;top:288px">Distance</div>
<div class="t" style="left:385px;top:308px">Timer</div>
<div class="f n" style="left:439px;top:265px;width:81px;height:18px">0</div>
<div class="f g n" style="left:439px;top:285px;width:81px;height:18px">0</div>
<svg style="left:505px;top:265px" width="15" height="38" viewBox="0 0 15 38"><g fill="#f4f4f4" stroke="#000"><rect x=".5" y=".5" width="14" height="17"/><rect x=".5" y="20.500" width="14" height="17"/></g><path d="M4 7l3.500-4 3.500 4zM4 11h7l-3.500 4zM4 27l3.500-4 3.500 4zM4 31h7l-3.500 4z" fill="#555"/></svg>
<div class="d" style="left:439px;top:305px;width:81px;height:18px">0</div>

<div class="gr" style="left:533px;top:132px;width:190px;height:197px"></div>
<div class="lg" style="left:543px;top:124px;width:46px">Action</div>
<div class="f" style="left:558px;top:139px;width:157px;height:18px;padding-left:5px;line-height:16px">NONE</div>
<svg style="left:702px;top:145px" width="10" height="6" viewBox="0 0 10 6"><path d="M1 0h8L5 5z" fill="#aaa"/></svg>

<div class="a" style="left:301px;top:341px;width:13px;height:13px;background:#efefef;border:1px solid #999"></div>
<div class="t" style="left:321px;top:341px">Delete line</div>
<div class="btn" style="left:413px">Journal</div><div class="btn" style="left:477px">Delete All</div><div class="btn" style="left:541px">Load</div><div class="btn" style="left:605px">Save</div><div class="btn" style="left:669px">OK</div>

<!-- status bar -->
<div class="a" style="left:0;top:745px;width:1304px;height:23px;background:#f0f0f0"></div>
<div class="st c" style="left:3px">查看幫忙，請按 F1</div>
<div class="sb" style="left:612px"></div><div class="st" style="left:617px">Default</div>
<div class="sb" style="left:739px"></div><div class="st" style="left:745px;letter-spacing:-.55px">2017.08.21 03:00</div>
<div class="sb" style="left:837px"></div><div class="st q" style="left:843px">O: 109.218</div>
<div class="sb" style="left:908px"></div><div class="st q" style="left:915px">H: 109.265</div>
<div class="sb" style="left:981px"></div><div class="st q" style="left:988px">L: 109.197</div>
<div class="sb" style="left:1047px"></div><div class="st q" style="left:1053px">C: 109.250</div>
<div class="sb" style="left:1117px"></div><div class="sb" style="left:1183px"></div>
<svg style="left:1189px;top:751px" width="15" height="14" viewBox="0 0 15 14"><path d="M0 10h3v3H0zM3 8h3v5H3zM6 5h3v8H6z" fill="#3ca03c"/><path d="M9.500 2.500h2v10h-2zM12.500.5h2v12h-2z" fill="#ddd" stroke="#999"/></svg>
<div class="st" style="left:1209px;letter-spacing:-.4px">251.77 ms</div>

<!-- taskbar -->
<div class="a" style="left:1302px;top:0;width:2px;height:745px;background:#fff"></div>
<div class="a" style="left:1304px;top:0;width:62px;height:768px;background:#070b11"></div>
<div class="a" style="left:1304px;top:184px;width:60px;height:46px;background:#2e343b"></div>
<div class="a" style="left:1304px;top:282px;width:60px;height:38px;background:#1c2127"></div>
<div class="a" style="left:1304px;top:420px;width:60px;height:38px;background:#1c2127"></div>
<div class="a" style="left:1304px;top:282px;width:9px;height:38px;background:#2d6a37"></div>
<div class="a" style="left:1304px;top:420px;width:9px;height:38px;background:#2d6a37"></div>
<div class="a" style="left:1364px;top:94px;width:2px;height:43px;background:#76b9ed"></div>
<div class="a" style="left:1364px;top:140px;width:2px;height:41px;background:#76b9ed"></div>
<div class="a" style="left:1364px;top:184px;width:2px;height:46px;background:#8cc4ee"></div>
<div class="a" style="left:1364px;top:235px;width:2px;height:40px;background:#76b9ed"></div>
<div class="a" style="left:1364px;top:282px;width:2px;height:38px;background:#4fc93f"></div>
<div class="a" style="left:1364px;top:328px;width:2px;height:39px;background:#76b9ed"></div>
<div class="a" style="left:1364px;top:373px;width:2px;height:40px;background:#76b9ed"></div>
<div class="a" style="left:1364px;top:420px;width:2px;height:38px;background:#4fc93f"></div>
<svg style="left:1304px;top:0" width="62" height="460" viewBox="0 0 62 460">
<defs><clipPath id="cr"><rect x="0" y="305" width="40" height="85"/></clipPath></defs>
<!-- VIP right half sits under the taskbar icons -->
<g clip-path="url(#cr)"><circle cx="-12" cy="347" r="34.500" fill="#4f422d"/><path d="M0 326L16 318C14 340 6 350 0 358Z" fill="#8c6c35"/></g>
<path d="M23 14l7.500-1v7H23zM32 12.800L40 12v8h-8zM23 21.500h7.500v7L23 27.500zM32 21.500h8V29l-8-1z" fill="#fff"/>
<rect x="19" y="54" width="24" height="24" fill="#d42a2a"/><path d="M22 70c1-6 6-12 18-14-6 4-7 6-8 10-1 5-4 8-7 9z" fill="#fff"/><path d="M19 54h24v4H19z" fill="#e86a6a"/>
<rect x="19" y="101" width="24" height="17" rx="1" fill="#cfe2f3" stroke="#7a8ea4"/><rect x="22" y="105" width="18" height="9" fill="#3a78c8"/><path d="M24 108h14M24 111h14" stroke="#bcd6f0" stroke-dasharray="2 1"/><path d="M28 118h6l1 5h-8z" fill="#aab4bc"/><ellipse cx="31" cy="123" rx="8" ry="2" fill="#9aa4ac"/>
<circle cx="31" cy="160" r="12" fill="#dd4437"/><path d="M31 154h10.400A12 12 0 0 1 31 172z" fill="#fccb42"/><path d="M31 160l-10.400 6A12 12 0 0 0 30 172l6-9z" fill="#1da25a"/><circle cx="31" cy="160" r="5.500" fill="#4a8cf0" stroke="#fff" stroke-width="1.500"/>
<circle cx="24" cy="212" r="6" fill="#d8c63c"/><circle cx="38" cy="212" r="6" fill="#3e8ad0"/><circle cx="31" cy="203" r="7" fill="#4aa54a"/><circle cx="31" cy="207" r="5" fill="#e8803c"/><text x="31" y="210" font-size="8" fill="#fff" text-anchor="middle" font-family="Liberation Sans">5</text>
<text x="31" y="263" font-size="30" font-weight="bold" fill="#2a9fd8" text-anchor="middle" font-family="Liberation Sans">e</text><ellipse cx="31" cy="252" rx="14" ry="6" fill="none" stroke="#e0b428" stroke-width="2" transform="rotate(-35 31 252)"/>
<use href="#tv" x="19" y="289" width="24" height="24"/>
<use href="#tv" x="10" y="335" width="24" height="24"/>
<use href="#tv" x="19" y="381" width="24" height="24"/>
<use href="#tv" x="19" y="427" width="24" height="24"/>
</svg>
<div class="t" style="left:1341px;top:340px;color:#eee">I...</div>

<!-- VIP left half -->
<svg style="left:1250px;top:305px" width="54" height="85" viewBox="1250 305 54 85">
<defs><clipPath id="cl"><rect x="1250" y="305" width="54" height="85"/></clipPath>
<linearGradient id="gd" x1="0" y1="0" x2="1" y2="1"><stop offset="0" stop-color="#f4dab0"/><stop offset="1" stop-color="#e0ae60"/></linearGradient></defs>
<g clip-path="url(#cl)"><circle cx="1292" cy="347" r="34.500" fill="#fdf1de"/><path d="M1261 326C1272 328 1280 333 1285 340L1304 326V372C1300 366 1297 362 1296 358C1296 368 1298 375 1301 381C1290 372 1285 358 1281 345C1276 336 1269 331 1261 326Z" fill="url(#gd)"/>
<text x="1288" y="348" font-size="9" font-weight="bold" fill="#fbeed6" text-anchor="middle" font-family="Liberation Sans">VIP</text></g>
</svg>

<!-- tray -->
<div class="a" style="left:1304px;top:583px;width:62px;height:17px;background:#f0f0f0"></div>
<div class="a" style="left:1332px;top:584px;width:17px;height:15px;background:#cdcdcd"></div>
<svg style="left:1304px;top:583px" width="62" height="17" viewBox="0 0 62 17"><path d="M12 4L7 8.500 12 13M52 4l5 4.500-5 4.500" fill="none" stroke="#666" stroke-width="2"/></svg>
<svg style="left:1320px;top:609px" width="10" height="15" viewBox="0 0 10 15"><path d="M8 1L2 7.500 8 14" fill="none" stroke="#ddd" stroke-width="1.200"/></svg>
<div class="t" style="left:1304px;top:641px;width:62px;text-align:center;color:#dde;font-size:12px">ENG</div>
<div class="t" style="left:1304px;top:680px;width:62px;text-align:center;color:#e4e4e4;font-size:12px">9:21 PM</div>
<div class="t" style="left:1304px;top:696px;width:62px;text-align:center;color:#e4e4e4;font-size:12px">8/30/2017</div>
<svg style="left:1326px;top:731px" width="18" height="16" viewBox="0 0 18 16"><path d="M.5.500h15.500v11.500h-5l-2.500 3-2.500-3H.5z" fill="none" stroke="#eee"/></svg>
<div class="a" style="left:1304px;top:763px;width:62px;height:1px;background:#444"></div>
</body></html>
